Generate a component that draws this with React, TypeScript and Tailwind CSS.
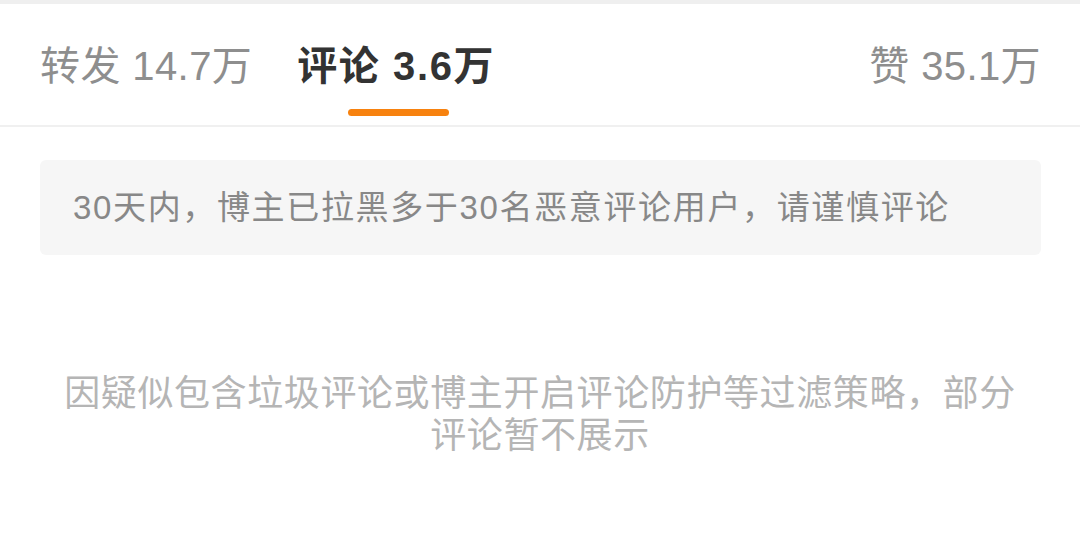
const font = { fontFamily: '"Liberation Sans", "Noto Sans CJK SC", sans-serif' };

interface TabProps {
	label: string;
	count: string;
	active?: boolean;
}

const Tab: React.FC<TabProps> = ({ label, count, active }) => {
	return (
		<div className="flex flex-col items-center">
			<span
				className={
					active
						? 'text-[40px] leading-[40px] font-bold tracking-[1.6px] text-[#333333] whitespace-nowrap'
						: 'text-[40px] leading-[40px] tracking-[0.4px] text-[#8e8e8e] whitespace-nowrap'
				}
			>
				{label} {count}
			</span>
			{active && <div className="mt-[23px] ml-[4px] h-[7px] w-[101px] rounded-full bg-[#f7820f]" />}
		</div>
	);
};

export default function App() {
	return (
		<div className="w-[1080px] h-[550px] bg-white flex flex-col" style={font}>
			<div className="h-[4px] bg-[#efefef]" />
			<div className="h-[123px] pl-[40px] pr-[39px] pt-[42px] flex items-start justify-between border-b-2 border-[#f0f0f0]">
				<div className="flex items-start gap-[45px]">
					<Tab label="转发" count="14.7万" />
					<Tab label="评论" count="3.6万" active />
				</div>
				<Tab label="赞" count="35.1万" />
			</div>
			<div className="mt-[33px] mx-[40px] w-[1001px] h-[95px] rounded-[6px] bg-[#f6f6f6] flex items-center pl-[33px]">
				<span className="text-[33px] leading-[40px] tracking-[1.65px] text-[#888888] whitespace-nowrap">
					30天内，博主已拉黑多于30名恶意评论用户，请谨慎评论
				</span>
			</div>
			<div className="mt-[118px] mx-auto max-w-[970px] text-center text-[36px] leading-[42px] tracking-[0.6px] text-[#b5b5b5]">
				因疑似包含垃圾评论或博主开启评论防护等过滤策略，部分评论暂不展示
			</div>
		</div>
	);
}
